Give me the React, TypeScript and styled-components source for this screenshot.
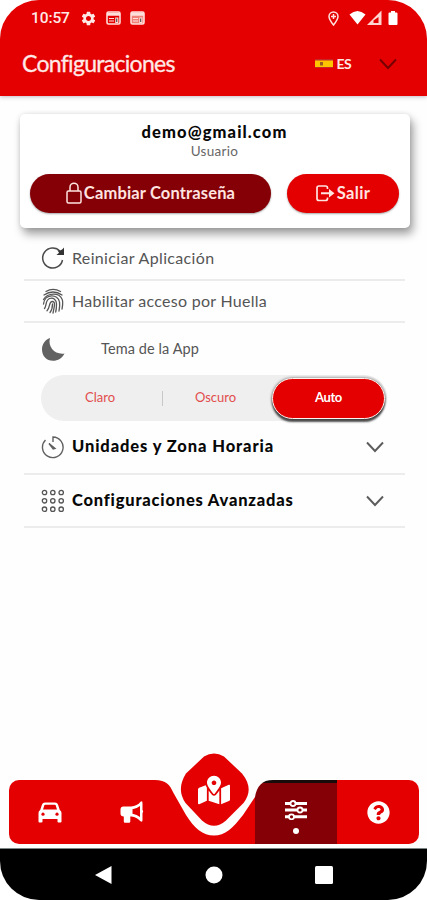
import React from "react";
import styled, { createGlobalStyle, css } from "styled-components";
import { FaMapMarkedAlt, FaQuestionCircle } from "react-icons/fa";
import { MdSettings } from "react-icons/md";

const red = "#e40000";
const darkRed = "#850006";

const GlobalStyle = createGlobalStyle`
  * { box-sizing: border-box; }
  body { margin: 0; background: #fff; font-family: Lato, "Liberation Sans", sans-serif; }
  button { font: inherit; border: 0; padding: 0; color: inherit; background: none; }
  svg { display: block; flex: none; }
`;

const Screen = styled.main`
  width: 427px;
  height: 900px;
  display: flex;
  flex-direction: column;
  overflow: hidden;
  border-radius: 39px;
  background: #fefefe;
`;

const Text = styled.span<{ $size: number; $track?: number; $weight?: number; $color?: string }>`
  font-size: ${(p) => p.$size}px;
  letter-spacing: ${(p) => p.$track ?? 0}px;
  font-weight: ${(p) => p.$weight ?? 400};
  color: ${(p) => p.$color ?? "inherit"};
  line-height: 1.2;
  white-space: nowrap;
`;

const Top = styled.header`
  height: 96px;
  flex: none;
  background: ${red};
  color: #ffe9e6;
  box-shadow: 0 1px 4px rgba(90, 60, 90, 0.35);
`;

const StatusBar = styled.div`
  height: 36px;
  display: flex;
  align-items: center;
  padding: 0 29px 0 31px;
`;

const Clock = styled.span`
  font: 500 15.5px/18px Roboto, sans-serif;
  letter-spacing: -0.1px;
  width: 49px;
`;

const StatusIcons = styled.div<{ $gap: number; $right?: boolean }>`
  display: flex;
  align-items: center;
  gap: ${(p) => p.$gap}px;
  ${(p) => p.$right && css`margin-left: auto;`}
`;

const TitleBar = styled.div`
  height: 56px;
  display: flex;
  align-items: center;
  padding: 0 30px 0 22px;
`;

const Title = styled.h1`
  margin: 0;
  font-size: 23px;
  font-weight: 400;
  line-height: 1.2;
  letter-spacing: -0.7px;
  -webkit-text-stroke: 0.3px currentColor;
`;

const Language = styled.button`
  margin-left: auto;
  display: flex;
  align-items: center;
  gap: 3px;
  svg:last-child { margin-left: 25px; }
`;

const Card = styled.section`
  margin: 18px 17px 0 20px;
  height: 114px;
  flex: none;
  display: flex;
  flex-direction: column;
  align-items: center;
  padding: 9px 11px 0 10px;
  border-radius: 5px;
  background: #fff;
  box-shadow: 3px 6px 10px rgba(0, 0, 0, 0.38), 0 0 5px rgba(0, 0, 0, 0.1);
`;

const Actions = styled.div`
  display: flex;
  justify-content: space-between;
  width: 100%;
  margin-top: 15px;
`;

const Pill = styled.button<{ $width: number; $bg: string }>`
  width: ${(p) => p.$width}px;
  height: 39px;
  display: flex;
  align-items: center;
  justify-content: center;
  gap: 2px;
  border-radius: 20px;
  background: ${(p) => p.$bg};
  color: #ffe4e0;
  box-shadow: 0 1px 2px rgba(0, 0, 0, 0.35);
`;

const Settings = styled.div`
  margin: 9px 22px 0 24px;
  display: flex;
  flex-direction: column;
`;

const Row = styled.div<{ $height: number; $plain?: boolean; $indent?: number }>`
  height: ${(p) => p.$height}px;
  display: flex;
  align-items: center;
  gap: ${(p) => p.$indent ?? 7}px;
  padding: 0 21px 0 17px;
  color: #555;
  border-bottom: ${(p) => (p.$plain ? "0" : "2px solid #ececec")};
  & > svg:nth-child(3) { margin-left: auto; }
`;

const Segments = styled.div`
  height: 46px;
  width: 346px;
  margin: 1px 0 0 17px;
  padding-right: 2px;
  display: flex;
  align-items: center;
  border-radius: 23px;
  background: #efefef;
`;

const Segment = styled.button<{ $active?: boolean; $divider?: boolean }>`
  display: flex;
  align-items: center;
  justify-content: center;
  ${(p) =>
    p.$active
      ? css`
          width: 113px;
          height: 41px;
          margin-left: auto;
          border: 1.5px solid #fff3ef;
          border-radius: 21px;
          background: ${red};
          color: #fff;
          box-shadow: 0 3px 2px rgba(30, 30, 30, 0.75), 0 0 3px rgba(0, 0, 0, 0.6);
        `
      : css`
          width: ${p.$divider ? 122 : 105}px;
          height: 15px;
          padding-right: ${p.$divider ? 3 : 0}px;
          color: #e24d4d;
          border-right: ${p.$divider ? "1px solid #c8c8c8" : "0"};
        `}
`;

const Tabs = styled.nav`
  margin: auto 8px 4px 9px;
  height: 64px;
  flex: none;
  display: grid;
  grid-template-columns: repeat(5, 82px);
  border-radius: 10px;
  background: ${red};
  color: #fff;
`;

const Tab = styled.button<{ $active?: boolean }>`
  display: flex;
  flex-direction: column;
  align-items: center;
  justify-content: center;
  ${(p) =>
    p.$active &&
    css`
      background: ${darkRed};
      box-shadow: inset 0 3px #170b0b;
      padding-top: 10px;
    `}
`;

const ActiveDot = styled.i`
  width: 6px;
  height: 6px;
  margin-top: 8px;
  border-radius: 50%;
  background: #fff;
`;

const MapTab = styled.div`
  position: relative;
`;

const Notch = styled.svg`
  position: absolute;
  left: -23px;
  bottom: 0;
`;

const MapIcon = styled(FaMapMarkedAlt)`
  position: absolute;
  left: 25px;
  top: -6px;
`;

const SystemNav = styled.footer`
  height: 52px;
  flex: none;
  display: grid;
  grid-template-columns: repeat(3, 110px);
  justify-content: center;
  align-items: center;
  justify-items: center;
  background: #000;
  border-top: 1px solid #7b8585;
`;

const Chevron = ({ color }: { color: string }) => (
  <svg width="18" height="12" viewBox="0 0 18 12" fill="none" stroke={color} strokeWidth="1.9">
    <path d="M1 1.5 9 10 17 1.5" />
  </svg>
);

const NewsIcon = ({ dim }: { dim?: boolean }) => (
  <svg width="15" height="14" viewBox="0 0 15 14">
    <rect x="1" y="1" width="13" height="12" rx="1.5" fill={dim ? "#f08078" : "none"} stroke="#ffdfdb" strokeWidth="1.6" />
    <path d="M1 3.3h13" stroke="#ffdfdb" strokeWidth="3" />
    <path d="M3 7.5h5M3 10h5M9.8 7h2v4.5h-2z" stroke="#ffdfdb" strokeWidth="1.2" />
  </svg>
);

const LocationIcon = () => (
  <svg width="11" height="15" viewBox="0 0 11 15" fill="none" stroke="#ffe1de">
    <path d="M5.5 14C3 10.8 1 8 1 5.4a4.5 4.5 0 0 1 9 0C10 8 8 10.8 5.5 14Z" strokeWidth="1.5" />
    <path d="M5.5 3v5M3 5.5h5" strokeWidth="1.5" />
  </svg>
);

const SignalIcons = () => (
  <svg width="49" height="16" viewBox="0 0 49 16" fill="#fff">
    <path d="M.5 4.5Q8.500-2.500 16.500 4.500L8.500 14.500Z" />
    <path d="M32.500.500V15H18Z" fill="#ffd5d1" />
    <path d="M29.500 7v6h-5v-2.500Z" fill={red} />
    <path d="M42 1h4v1.500h1.500q1 0 1 1V14q0 1-1 1h-7q-1 0-1-1V3.500q0-1 1-1H42Z" />
  </svg>
);

const FlagIcon = () => (
  <svg width="18" height="9" viewBox="0 0 18 9">
    <path fill="#c62828" d="M0 0h18v9H0z" />
    <path fill="#ffc400" d="M0 1.500h18v6.500H0z" />
    <path fill="#9c5b20" d="M5 3h3v3.500H5z" />
  </svg>
);

const LockIcon = () => (
  <svg width="16" height="22" viewBox="0 0 16 22" fill="none" stroke="currentColor" strokeWidth="1.500">
    <rect x="1" y="9" width="14" height="12" rx="1.500" />
    <path d="M4 9V5.200a4 4 0 0 1 8 0V9" />
  </svg>
);

const ExitIcon = () => (
  <svg width="19" height="17" viewBox="0 0 19 17" fill="none" stroke="currentColor" strokeWidth="1.700">
    <path d="M11.500 4V3q0-2-2-2H3Q1 1 1 3v10.500q0 2 2 2h6.500q2 0 2-2v-1" />
    <path d="M5 8.300h10" strokeWidth="2" />
    <path d="M13 4 18.500 8.300 13 12.600Z" fill="currentColor" stroke="none" />
  </svg>
);

const ReloadIcon = () => (
  <svg width="24" height="24" viewBox="0 0 24 24" fill="none" stroke="#4c4c4c" strokeWidth="1.500">
    <path d="M19 5.200A10 10 0 1 0 21.500 14" />
    <path d="M23 1.500v7.500h-7.500c1-1 2-1.500 2.500-2.500l-1.500-2c2.500.5 5-.5 6.500-3Z" fill="#333" stroke="none" />
  </svg>
);

const FingerprintIcon = () => (
  <svg width="24" height="26" viewBox="0 0 24 26" fill="none" stroke="#555" strokeWidth="1.300" strokeLinecap="round">
    <path d="M5 3.500Q12-.8 19.500 3.500M3 7Q12 1 21 7" />
    <path d="M2.500 11.500C7 4.500 18 4.500 21 11c1.500 3 .5 7 0 10" />
    <path d="M2.500 16C3.500 5.500 17 5.500 18.500 14c.5 3 0 6-.5 9" />
    <path d="M3.500 20.500C6 17 4 12.500 8.500 10.500c4-1.500 7 1.500 7 5.500 0 3 0 5-.8 8" />
    <path d="M6 22.800c3.500-3.300 1.500-9.300 5.500-9.300 3.500 0 1.500 6.500.5 11.500" />
    <path d="M9 24.500c2-2.500 2.500-5 2.500-8.500" />
  </svg>
);

const MoonIcon = () => (
  <svg width="24" height="24" viewBox="0 0 24 24" fill="#626262">
    <path d="M9 1C6.500 10 14 18 23.500 16.500 21 21.500 17 23.800 12 23.800 5.500 23.800 1 19 1 12.500 1 7 4 3 9 1Z" />
  </svg>
);

const TimerIcon = () => (
  <svg width="24" height="24" viewBox="0 0 24 24" fill="none" stroke="#606060" strokeWidth="1.400">
    <path d="M12 7V2a10.300 10.300 0 1 1-7.500 3" />
    <path d="M8 8.500 14 13.500 12.200 14Z" fill="#555" />
  </svg>
);

const dots = [3.5, 11.8, 20.2];
const GridIcon = () => (
  <svg width="24" height="24" viewBox="0 0 24 24" fill="none" stroke="#555" strokeWidth="1.300">
    {dots.flatMap((y) => dots.map((x) => <circle key={`${x}-${y}`} cx={x} cy={y} r="2.200" />))}
  </svg>
);

const CarIcon = () => (
  <svg width="24" height="21" viewBox="0 0 24 21">
    <path
      fill="#fff"
      d="M7 .5h10q2.300 0 3 2l1.800 5.500Q23.500 9 23.500 11v8.500q0 1-1 1h-2q-1 0-1-1V17h-15v2.500q0 1-1 1h-2q-1 0-1-1V11q0-2 1.700-3L4 2.500q.7-2 3-2Z"
    />
    <path fill={red} d="M7.300 2.800h9.400q.7 0 1 .8L19 7.500H5L6.300 3.600q.3-.8 1-.8Z" />
    <circle cx="5" cy="12.200" r="1.600" fill={red} />
    <circle cx="19" cy="12.200" r="1.600" fill={red} />
  </svg>
);

const HornIcon = () => (
  <svg width="24" height="22" viewBox="0 0 24 22">
    <path
      fill="#fff"
      d="M3.500 5.500H11C15 5.500 18.500 3.500 20.500.800Q22.500-.5 22.500 2v7q1.300 1.500 0 3v7q0 2.500-2 1.200C18 17.500 15 16 11.500 15.500h-1.200v5q0 1.200-1.200 1.200H5q-1.200 0-1.200-1.200v-5Q.5 15.500.5 12.500V8.500q0-3 3-3Z"
    />
    <path fill={red} d="M12.500 8.200Q17 7.500 20 5v11Q17 13.500 12.500 12.800Z" />
  </svg>
);

const SlidersIcon = () => (
  <svg width="22" height="20" viewBox="0 0 22 20" stroke="#fff">
    <path d="M0 3.500h22M0 10h22M0 16.800h22" strokeWidth="3" />
    <g fill={darkRed} strokeWidth="1.800">
      <circle cx="8" cy="3.500" r="2.500" />
      <circle cx="15" cy="10" r="2.500" />
      <circle cx="6.500" cy="16.800" r="2.500" />
    </g>
  </svg>
);

export default function App() {
  return (
    <>
      <GlobalStyle />
      <Screen>
        <Top>
          <StatusBar>
            <Clock>10:57</Clock>
            <StatusIcons $gap={9}>
              <MdSettings size={17} />
              <NewsIcon />
              <NewsIcon dim />
            </StatusIcons>
            <StatusIcons $gap={10} $right>
              <LocationIcon />
              <SignalIcons />
            </StatusIcons>
          </StatusBar>
          <TitleBar>
            <Title>Configuraciones</Title>
            <Language>
              <FlagIcon />
              <Text $size={14} $track={-0.6} $weight={700}>ES</Text>
              <Chevron color="#760000" />
            </Language>
          </TitleBar>
        </Top>

        <Card>
          <Text $size={16.5} $track={1.1} $weight={900} $color="#080808">demo@gmail.com</Text>
          <Text $size={13.5} $track={0.3} $color="#666">Usuario</Text>
          <Actions>
            <Pill $width={241} $bg={darkRed}>
              <LockIcon />
              <Text $size={16.5} $track={0.15} $weight={700}>Cambiar Contraseña</Text>
            </Pill>
            <Pill $width={112} $bg={red}>
              <ExitIcon />
              <Text $size={16.5} $track={0.3} $weight={700}>Salir</Text>
            </Pill>
          </Actions>
        </Card>

        <Settings>
          <Row $height={44}>
            <ReloadIcon />
            <Text $size={16} $track={0.35}>Reiniciar Aplicación</Text>
          </Row>
          <Row $height={42}>
            <FingerprintIcon />
            <Text $size={16} $track={0.27}>Habilitar acceso por Huella</Text>
          </Row>
          <Row $height={51} $plain $indent={36}>
            <MoonIcon />
            <Text $size={14.5} $track={0.1}>Tema de la App</Text>
          </Row>
          <Segments>
            <Segment $divider><Text $size={13}>Claro</Text></Segment>
            <Segment><Text $size={13}>Oscuro</Text></Segment>
            <Segment $active><Text $size={13} $track={-0.4} $weight={700}>Auto</Text></Segment>
          </Segments>
          <Row $height={54}>
            <TimerIcon />
            <Text $size={16.5} $track={0.9} $weight={900} $color="#080808">Unidades y Zona Horaria</Text>
            <Chevron color="#5c5c5c" />
          </Row>
          <Row $height={53}>
            <GridIcon />
            <Text $size={16.5} $track={0.8} $weight={900} $color="#080808">Configuraciones Avanzadas</Text>
            <Chevron color="#5c5c5c" />
          </Row>
        </Settings>

        <Tabs>
          <Tab><CarIcon /></Tab>
          <Tab><HornIcon /></Tab>
          <MapTab>
            <Notch width="128" height="94" viewBox="150 750 128 94">
              <path fill="#fefefe" d="M155 779V780C166 780 170 785 173.500 793L186 815C194 828 203 835.500 214 835.500S233 828 243 815L255 797C257 786 262 780 273 780V779Z" />
              <path fill={red} d="M204 756.500Q214 750.500 224 756.500L242 773.500Q254.500 789 243.500 803L226 820.500Q214 831 202 820.500L185.500 803Q176 789 186 773.500Z" />
            </Notch>
            <MapIcon size={32} />
          </MapTab>
          <Tab $active>
            <SlidersIcon />
            <ActiveDot />
          </Tab>
          <Tab><FaQuestionCircle size={23} /></Tab>
        </Tabs>

        <SystemNav>
          <svg width="17" height="20" viewBox="0 0 17 20" fill="#fff"><path d="M0 10 16.500 1v18Z" /></svg>
          <svg width="18" height="18" viewBox="0 0 18 18" fill="#fff"><circle cx="9" cy="9" r="8.500" /></svg>
          <svg width="18" height="18" viewBox="0 0 18 18" fill="#fff"><rect width="18" height="18" rx="1.500" /></svg>
        </SystemNav>
      </Screen>
    </>
  );
}
